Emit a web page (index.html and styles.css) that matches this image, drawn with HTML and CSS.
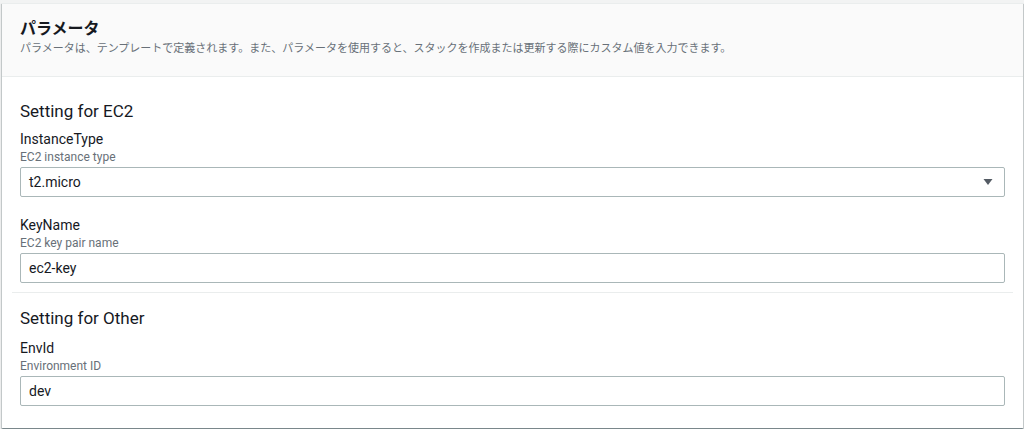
FILE: index.html
```html
<!DOCTYPE html>
<html lang="ja">

<head>
    <meta charset="UTF-8">
    <meta name="viewport" content="width=device-width, initial-scale=1.0">
    <title>パラメータ</title>
    <link rel="stylesheet" href="styles.css">
</head>

<body>
    <div class="page">
        <div class="card">
            <div class="card-header">
                <h2 class="title">パラメータ</h2>
                <p class="summary">パラメータは、テンプレートで定義されます。また、パラメータを使用すると、スタックを作成または更新する際にカスタム値を入力できます。</p>
            </div>

            <div class="section first">
                <h3 class="section-title">Setting for EC2</h3>
                <div class="field">
                    <div class="label">InstanceType</div>
                    <div class="hint">EC2 instance type</div>
                    <div class="control select">
                        <span>t2.micro</span>
                        <svg class="caret" width="10" height="8" viewBox="0 0 10 8">
                            <path d="M0.5 1 L9.5 1 L5 7 Z" fill="#545b64"/>
                        </svg>
                    </div>
                </div>
                <div class="field">
                    <div class="label">KeyName</div>
                    <div class="hint">EC2 key pair name</div>
                    <input class="control" type="text" value="ec2-key">
                </div>
            </div>

            <div class="divider"></div>

            <div class="section last">
                <h3 class="section-title">Setting for Other</h3>
                <div class="field">
                    <div class="label">EnvId</div>
                    <div class="hint">Environment ID</div>
                    <input class="control" type="text" value="dev">
                </div>
            </div>
        </div>
    </div>
</body>

</html>
```

FILE: styles.css
```css
* {
    margin: 0;
    padding: 0;
    box-sizing: border-box;
}

body {
    background: #f2f3f3;
    font-family: Roboto, "Noto Sans CJK JP", sans-serif;
    color: #16191f;
}

.page {
    padding: 3px 1px 2px 2px;
}

.card {
    background: #fff;
    border-top: 1px solid #eaeded;
    box-shadow: 0 1px 1px 0 rgba(0, 28, 36, .3), 1px 1px 1px 0 rgba(0, 28, 36, .15), -1px 1px 1px 0 rgba(0, 28, 36, .15);
}

.card-header {
    background: #fafafa;
    border-bottom: 1px solid #eaeded;
    padding: 13px 18px 19px;
}

.title {
    font-size: 16px;
    font-weight: 700;
    line-height: 24px;
}

.summary {
    font-size: 11px;
    line-height: 16px;
    color: #687078;
}

.section {
    padding: 0 18px;
    display: flex;
    flex-direction: column;
    gap: 18px;
}

.section.first {
    padding-top: 22px;
}

.section.last {
    padding-bottom: 22px;
}

.section-title {
    font-size: 17px;
    font-weight: 400;
    line-height: 24px;
    margin-bottom: -12px;
}

.section.last .section-title {
    margin-top: 1px;
    margin-bottom: -10px;
}

.field {
    display: flex;
    flex-direction: column;
}

.label {
    font-size: 14px;
    line-height: 20px;
}

.hint {
    font-size: 12px;
    line-height: 16px;
    color: #687078;
    margin-bottom: 2px;
}

.control {
    height: 30px;
    border: 1px solid #aab7b8;
    border-radius: 2px;
    padding: 0 8px;
    font-family: Roboto, sans-serif;
    font-size: 14px;
    color: #16191f;
    background: #fff;
    outline: none;
    width: 100%;
}

.select {
    display: flex;
    align-items: center;
    justify-content: space-between;
    padding-right: 11px;
}

.divider {
    height: 1px;
    background: #eaeded;
    margin: 9px 10px 12px;
}
```
